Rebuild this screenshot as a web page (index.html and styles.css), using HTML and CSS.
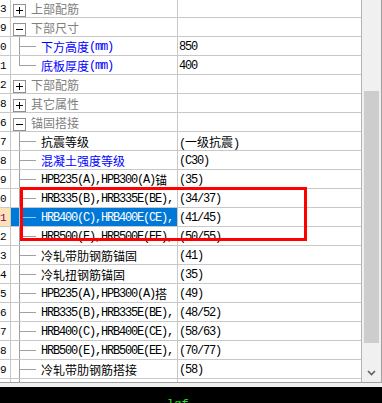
FILE: index.html
```html
<!DOCTYPE html>
<html lang="zh-CN">
<head>
    <meta charset="UTF-8">
    <title>属性编辑</title>
    <link rel="stylesheet" href="styles.css">
</head>
<body>
    <div class="panel">
        <div class="grid">
            <div class="rows">
                <div class="row">
                    <div class="num">3</div>
                    <div class="label"><span class="box plus"></span><span class="group">上部配筋</span></div>
                    <div class="value"></div>
                </div>
                <div class="row">
                    <div class="num">9</div>
                    <div class="label"><span class="box"></span><span class="group">下部尺寸</span></div>
                    <div class="value"></div>
                </div>
                <div class="row">
                    <div class="num">0</div>
                    <div class="label child blue">下方高度<span class="en">(mm)</span></div>
                    <div class="value en">850</div>
                </div>
                <div class="row">
                    <div class="num">1</div>
                    <div class="label child last blue">底板厚度<span class="en">(mm)</span></div>
                    <div class="value en">400</div>
                </div>
                <div class="row">
                    <div class="num">2</div>
                    <div class="label"><span class="box plus"></span><span class="group">下部配筋</span></div>
                    <div class="value"></div>
                </div>
                <div class="row">
                    <div class="num">8</div>
                    <div class="label"><span class="box plus"></span><span class="group">其它属性</span></div>
                    <div class="value"></div>
                </div>
                <div class="row">
                    <div class="num">6</div>
                    <div class="label"><span class="box"></span><span class="group">锚固搭接</span></div>
                    <div class="value"></div>
                </div>
                <div class="row">
                    <div class="num">7</div>
                    <div class="label child">抗震等级</div>
                    <div class="value"><span class="en">(</span>一级抗震<span class="en">)</span></div>
                </div>
                <div class="row">
                    <div class="num">8</div>
                    <div class="label child blue">混凝土强度等级</div>
                    <div class="value en">(C30)</div>
                </div>
                <div class="row">
                    <div class="num">9</div>
                    <div class="label child"><span class="en">HPB235(A),HPB300(A)</span>锚</div>
                    <div class="value en">(35)</div>
                </div>
                <div class="row">
                    <div class="num">0</div>
                    <div class="label child"><span class="en">HRB335(B),HRB335E(BE),</span></div>
                    <div class="value en">(34/37)</div>
                </div>
                <div class="row sel">
                    <div class="num">1</div>
                    <div class="label child"><span class="en">HRB400(C),HRB400E(CE),</span></div>
                    <div class="value en">(41/45)</div>
                </div>
                <div class="row">
                    <div class="num">2</div>
                    <div class="label child"><span class="en">HRB500(E),HRB500E(EE),</span></div>
                    <div class="value en">(50/55)</div>
                </div>
                <div class="row">
                    <div class="num">3</div>
                    <div class="label child">冷轧带肋钢筋锚固</div>
                    <div class="value en">(41)</div>
                </div>
                <div class="row">
                    <div class="num">4</div>
                    <div class="label child">冷轧扭钢筋锚固</div>
                    <div class="value en">(35)</div>
                </div>
                <div class="row">
                    <div class="num">5</div>
                    <div class="label child"><span class="en">HPB235(A),HPB300(A)</span>搭</div>
                    <div class="value en">(49)</div>
                </div>
                <div class="row">
                    <div class="num">6</div>
                    <div class="label child"><span class="en">HRB335(B),HRB335E(BE),</span></div>
                    <div class="value en">(48/52)</div>
                </div>
                <div class="row">
                    <div class="num">7</div>
                    <div class="label child"><span class="en">HRB400(C),HRB400E(CE),</span></div>
                    <div class="value en">(58/63)</div>
                </div>
                <div class="row">
                    <div class="num">8</div>
                    <div class="label child"><span class="en">HRB500(E),HRB500E(EE),</span></div>
                    <div class="value en">(70/77)</div>
                </div>
                <div class="row">
                    <div class="num">9</div>
                    <div class="label child">冷轧带肋钢筋搭接</div>
                    <div class="value en">(58)</div>
                </div>
                <div class="row">
                    <div class="num"></div>
                    <div class="label child"></div>
                    <div class="value"></div>
                </div>
            </div>
        </div>
        <div class="vscroll">
            <div class="thumb"></div>
            <svg class="arrow" width="9" height="6" viewBox="0 0 9 6">
                <path d="M1 1 L4.5 4.5 L8 1" fill="none" stroke="#606060" stroke-width="1.6"/>
            </svg>
        </div>
    </div>
    <div class="strip"></div>
    <div class="console"><span>lgf</span></div>

    <div class="mark"></div>
</body>
</html>
```

FILE: styles.css
```css
* {
    margin: 0;
    padding: 0;
    box-sizing: border-box;
}
body {
    width: 382px;
    height: 403px;
    overflow: hidden;
    position: relative;
    background: #f0f0f0;
    font-family: "Noto Sans CJK SC", sans-serif;
    font-size: 12px;
    color: #000;
}
.panel {
    display: flex;
    height: 383px;
    border-bottom: 1px solid #a0a0a0;
    background: #fff;
}
.grid {
    width: 362px;
    border-right: 1px solid #b4b4b4;
    overflow: hidden;
}
.rows {
    margin-top: -1px;
}
.row {
    display: flex;
    height: 19px;
    border-bottom: 1px solid #c8c8c8;
    line-height: 18px;
}
.num {
    width: 11px;
    flex: none;
    border-right: 1px solid #c8c8c8;
    padding: 1px 0 0 0;
    overflow: hidden;
    font-family: "Liberation Mono", monospace;
    font-size: 11px;
}
.label {
    width: 167px;
    flex: none;
    display: flex;
    border-right: 1px solid #c8c8c8;
    padding-top: 1px;
    overflow: hidden;
    white-space: nowrap;
}
.value {
    flex: 1;
    padding: 1px 0 0 1px;
    overflow: hidden;
    white-space: nowrap;
}
.en {
    font-family: "Liberation Mono", monospace;
    font-size: 12px;
    letter-spacing: -1.2px;
}
.group {
    color: #808080;
}
.blue {
    color: #0000ff;
}
.box {
    flex: none;
    width: 13px;
    height: 13px;
    margin: 4px 5px 0 2px;
    border: 1px solid #909090;
    background: linear-gradient(#000, #000) 2px 5px / 7px 1px no-repeat, #fff;
}
.box.plus {
    background: linear-gradient(#000, #000) 2px 5px / 7px 1px no-repeat,
                linear-gradient(#000, #000) 5px 2px / 1px 7px no-repeat,
                #fff;
}
.child {
    padding-left: 30px;
    background: linear-gradient(#a0a0a0, #a0a0a0) 8px 0 / 1px 100% no-repeat,
                linear-gradient(#a0a0a0, #a0a0a0) 8px 9px / 17px 1px no-repeat;
}
.child.last {
    background-size: 1px 10px, 17px 1px;
}
.sel .num {
    background: #ffe2b4;
    color: #800080;
}
.sel .label {
    color: #fff;
    background: linear-gradient(#9cc6ee, #9cc6ee) 8px 0 / 1px 100% no-repeat,
                linear-gradient(#9cc6ee, #9cc6ee) 8px 9px / 17px 1px no-repeat,
                #0078d7;
}
.vscroll {
    width: 20px;
    flex: none;
    border-right: 1px solid #a0a0a0;
    background: #f0f0f0;
    display: flex;
    flex-direction: column;
    align-items: center;
}
.thumb {
    width: 15px;
    height: 252px;
    margin-top: 91px;
    background: #cdcdcd;
}
.arrow {
    margin-top: 27px;
}
.strip {
    height: 4px;
}
.console {
    height: 16px;
    background: #000;
    padding: 11px 0 0 167px;
    color: #1fe01f;
    font-family: "Liberation Mono", monospace;
    font-size: 12px;
    line-height: 14px;
}
.mark {
    position: absolute;
    left: 20px;
    top: 187px;
    width: 287px;
    height: 54px;
    border: 3px solid #ff0000;
}
```
